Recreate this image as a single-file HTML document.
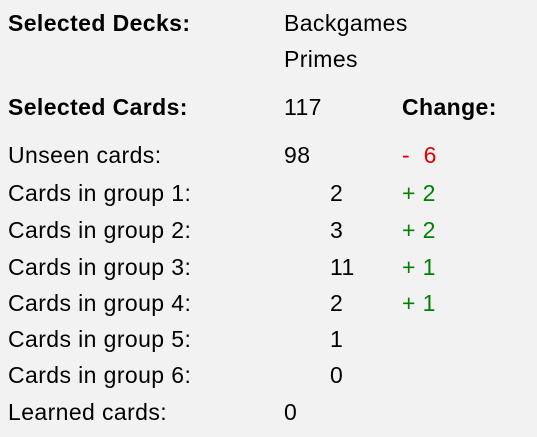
<!DOCTYPE html>
<html><head><style>
body{margin:0;width:537px;height:437px;background:#f2f2f2;font-family:"Liberation Sans",Arial,sans-serif;font-size:23px;letter-spacing:0.4px;color:#000;position:relative;overflow:hidden}
div{position:absolute;line-height:24px;white-space:pre}
.b{font-weight:bold}
.r{color:#e00000}
.g{color:#008000}
</style></head><body>
<div class="b" style="left:8px;top:11px">Selected Decks:</div>
<div style="left:284px;top:11px">Backgames</div>
<div style="left:284px;top:47px">Primes</div>
<div class="b" style="left:8px;top:95px">Selected Cards:</div>
<div style="left:284px;top:95px">117</div>
<div class="b" style="left:402px;top:95px">Change:</div>
<div style="left:8px;top:143px">Unseen cards:</div>
<div style="left:284px;top:143px">98</div>
<div class="r" style="left:402px;top:143px">-  6</div>
<div style="left:8px;top:181px">Cards in group 1:</div>
<div style="left:330px;top:181px">2</div>
<div class="g" style="left:402px;top:181px">+ 2</div>
<div style="left:8px;top:218px">Cards in group 2:</div>
<div style="left:330px;top:218px">3</div>
<div class="g" style="left:402px;top:218px">+ 2</div>
<div style="left:8px;top:255px">Cards in group 3:</div>
<div style="left:330px;top:255px">11</div>
<div class="g" style="left:402px;top:255px">+ 1</div>
<div style="left:8px;top:291px">Cards in group 4:</div>
<div style="left:330px;top:291px">2</div>
<div class="g" style="left:402px;top:291px">+ 1</div>
<div style="left:8px;top:327px">Cards in group 5:</div>
<div style="left:330px;top:327px">1</div>
<div style="left:8px;top:363px">Cards in group 6:</div>
<div style="left:330px;top:363px">0</div>
<div style="left:8px;top:400px">Learned cards:</div>
<div style="left:284px;top:400px">0</div>
</body></html>
